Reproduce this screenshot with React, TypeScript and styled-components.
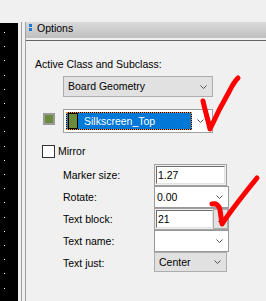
import styled, { createGlobalStyle } from 'styled-components';

const GlobalStyle = createGlobalStyle`
  html, body {
    margin: 0;
    padding: 0;
    background: #f0f0f0;
  }
  body {
    font-family: 'Liberation Sans', Arial, sans-serif;
    font-size: 10.5px;
    color: #000;
  }
`;

// canvas grid dots, one column visible at this width
const dotRows = Array.from({ length: 20 }, (_, i) => Math.round(9 + i * 14.2));

function Chevron() {
	return (
		<svg width="7" height="4" viewBox="0 0 7 4">
			<path d="M0.5 0.5 L3.5 3.5 L6.5 0.5" fill="none" stroke="#505050" strokeWidth="1" />
		</svg>
	);
}

interface ComboProps {
	value?: string;
	tone: 'gray' | 'white';
	width: number;
	height: number;
	inset: number;
}

function ComboBox({ value, tone, width, height, inset }: ComboProps) {
	return (
		<Combo $tone={tone} $width={width} $height={height}>
			<ComboValue $inset={inset}>{value}</ComboValue>
			<ComboArrow>
				<Chevron />
			</ComboArrow>
		</Combo>
	);
}

function App() {
	return (
		<>
			<GlobalStyle />
			<Root>
				<TopStrip />
				<Workspace>
					<Canvas>
						<svg width="18" height="278">
							{dotRows.map((y) => (
								<rect key={y} x="4" y={y} width="1" height="1" fill="#fff" />
							))}
						</svg>
					</Canvas>
					<Splitter>
						<SplitLine />
						<SplitLine />
					</Splitter>
					<Panel>
						<Header>
							<Grip>
								<GripDot />
								<GripDot />
							</Grip>
							<span>Options</span>
						</Header>
						<Body>
							<Label>Active Class and Subclass:</Label>
							<Indent $top={5}>
								<ComboBox value="Board Geometry" tone="gray" width={150} height={21} inset={4} />
							</Indent>

							<LayerRow>
								<LayerSwatch />
								<LayerCombo>
									<Selection>
										<ColorChip />
										<SelectionText>Silkscreen_Top</SelectionText>
									</Selection>
									<ComboArrow>
										<Chevron />
									</ComboArrow>
								</LayerCombo>
							</LayerRow>

							<MirrorRow>
								<CheckBox />
								<Label>Mirror</Label>
							</MirrorRow>

							<FieldGrid>
								<FieldLabel>Marker size:</FieldLabel>
								<TextField $width={73}>
									<FieldInput>1.27</FieldInput>
								</TextField>

								<FieldLabel>Rotate:</FieldLabel>
								<ComboBox value="0.00" tone="white" width={75} height={22} inset={2} />

								<FieldLabel>Text block:</FieldLabel>
								<TextField $width={75}>
									<FieldInput>21</FieldInput>
									<SpinButton>
										<DownTriangle />
									</SpinButton>
								</TextField>

								<FieldLabel>Text name:</FieldLabel>
								<ComboBox tone="white" width={75} height={22} inset={2} />

								<FieldLabel>Text just:</FieldLabel>
								<ComboBox value="Center" tone="gray" width={73} height={20} inset={4} />
							</FieldGrid>
						</Body>
					</Panel>
				</Workspace>

				{/* red hand-drawn ticks lying over the form */}
				<Scribble width="266" height="301" viewBox="0 0 266 301">
					<path
						d="M203 101 C205 110 208 120 210 129 C215 118 222 104 230 90 C233 84 236 80 238 78"
						fill="none"
						stroke="#ff0000"
						strokeWidth="5"
						strokeLinecap="round"
						strokeLinejoin="round"
					/>
					<path
						d="M212 204 C216 203 219 205 220 210 L222 224 C230 212 244 194 257 178"
						fill="none"
						stroke="#ff0000"
						strokeWidth="5"
						strokeLinecap="round"
						strokeLinejoin="round"
					/>
				</Scribble>
			</Root>
		</>
	);
}

const Root = styled.div`
	position: relative;
	display: flex;
	flex-direction: column;
	width: 266px;
	height: 301px;
	overflow: hidden;
`;

const TopStrip = styled.div`
	flex-shrink: 0;
	height: 22px;
`;

const Workspace = styled.div`
	display: flex;
	flex: 1;
	min-height: 0;
`;

const Canvas = styled.div`
	flex-shrink: 0;
	width: 18px;
	margin-top: 1px;

	background: #000;

	svg {
		display: block;
	}
`;

const Splitter = styled.div`
	box-sizing: border-box;
	display: flex;
	flex-shrink: 0;
	gap: 3px;
	width: 8px;
	padding-left: 3px;
`;

const SplitLine = styled.div`
	width: 1px;

	background: #a0a0a0;
`;

const Panel = styled.div`
	display: flex;
	flex: 1;
	flex-direction: column;
	min-width: 0;
`;

const Header = styled.div`
	box-sizing: border-box;
	display: flex;
	flex-shrink: 0;
	gap: 5px;
	align-items: flex-start;
	height: 16px;
	padding-left: 3px;

	line-height: 13px;
	background: linear-gradient(#dadada, #bfbfbf);
`;

const Grip = styled.div`
	display: flex;
	flex-direction: column;
	gap: 1px;
	padding-top: 2px;
`;

const GripDot = styled.div`
	width: 3px;
	height: 3px;

	background: #1a7ad6;
`;

const Body = styled.div`
	flex: 1;
	margin-top: 2px;
	padding: 17px 0 0 9px;

	border-top: 1px solid #646464;
`;

const Label = styled.div`
	line-height: 13px;
	white-space: nowrap;
`;

const Indent = styled.div<{ $top: number }>`
	margin: ${({ $top }) => $top}px 0 0 28px;
`;

const Combo = styled.div<{ $tone: 'gray' | 'white'; $width: number; $height: number }>`
	box-sizing: border-box;
	display: flex;
	align-items: center;
	width: ${({ $width }) => $width}px;
	height: ${({ $height }) => $height}px;

	border: 1px solid ${({ $tone }) => ($tone === 'gray' ? '#adadad' : '#999')};
	background: ${({ $tone }) => ($tone === 'gray' ? '#e1e1e1' : '#fff')};
`;

const ComboValue = styled.span<{ $inset: number }>`
	flex: 1;
	overflow: hidden;
	padding-left: ${({ $inset }) => $inset}px;

	line-height: 13px;
	white-space: nowrap;
`;

const ComboArrow = styled.span`
	display: flex;
	flex: 0 0 17px;
	align-items: center;
	align-self: stretch;
	justify-content: center;

	svg {
		display: block;
	}
`;

const LayerRow = styled.div`
	display: flex;
	gap: 8px;
	align-items: flex-start;
	margin-top: 12px;
	padding-left: 8px;
`;

const LayerSwatch = styled.div`
	box-sizing: border-box;
	width: 12px;
	height: 12px;
	margin-top: 4px;

	border: 2px solid #9a9a9a;
	background: #6a8c3a;
`;

const LayerCombo = styled.div`
	box-sizing: border-box;
	display: flex;
	width: 150px;
	height: 24px;
	padding: 2px 0 2px 2px;

	border: 1px solid #a0a0a0;
	background: #fff;
`;

/* focused list item: blue with the dotted focus frame */
const Selection = styled.div`
	box-sizing: border-box;
	display: flex;
	gap: 6px;
	align-items: center;
	width: 126px;
	height: 18px;
	padding-left: 1px;

	color: #fff;
	border: 1px dotted #ff9c2a;
	background: linear-gradient(#0078d7, #0078d7) padding-box, linear-gradient(#000, #000) border-box;
`;

const ColorChip = styled.div`
	box-sizing: border-box;
	width: 10px;
	height: 16px;

	border: 1px solid #000;
	background: #6a8c3a;
`;

const SelectionText = styled.span`
	line-height: 13px;
	white-space: nowrap;
`;

const MirrorRow = styled.div`
	display: flex;
	gap: 3px;
	align-items: center;
	margin-top: 12px;
	padding-left: 7px;
`;

const CheckBox = styled.div`
	box-sizing: border-box;
	width: 13px;
	height: 13px;

	border: 1px solid #333;
	background: #fff;
`;

const FieldGrid = styled.div`
	display: grid;
	grid-template-columns: 91px auto;
	grid-auto-rows: 22px;
	margin: 6px 0 0 28px;
`;

const FieldLabel = styled.div`
	align-self: center;

	line-height: 13px;
	white-space: nowrap;
`;

const TextField = styled.div<{ $width: number }>`
	box-sizing: border-box;
	display: flex;
	width: ${({ $width }) => $width}px;
	height: 22px;
	padding: 1px;

	border: 1px solid #a0a0a0;
	background: #f0f0f0;
`;

const FieldInput = styled.div`
	box-sizing: border-box;
	display: flex;
	flex: 1;
	align-items: center;
	padding-left: 1px;

	line-height: 13px;
	border-top: 1px solid #6d6d6d;
	border-left: 1px solid #6d6d6d;
	border-right: 1px solid #e3e3e3;
	border-bottom: 1px solid #e3e3e3;
	background: #fff;
`;

const SpinButton = styled.div`
	box-sizing: border-box;
	display: flex;
	flex: 0 0 15px;
	align-items: flex-end;
	justify-content: center;
	margin: -1px -1px -1px 0;
	padding-bottom: 4px;

	border: 1px solid #adadad;
	background: #e1e1e1;
`;

const DownTriangle = styled.div`
	width: 0;
	height: 0;

	border-left: 3px solid transparent;
	border-right: 3px solid transparent;
	border-top: 3px solid #000;
`;

const Scribble = styled.svg`
	position: absolute;
	top: 0;
	left: 0;
	pointer-events: none;
`;

export default App;
